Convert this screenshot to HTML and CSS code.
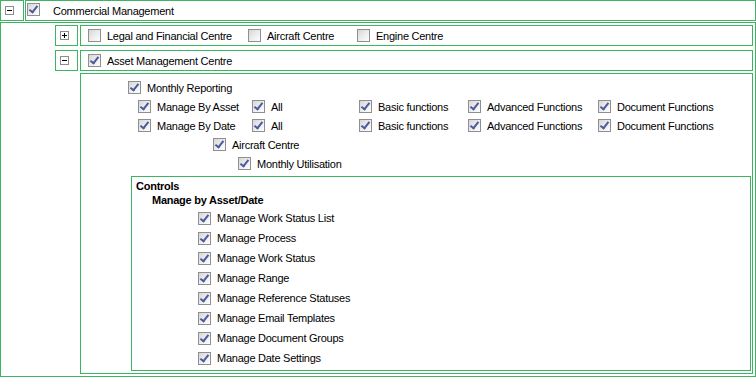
FILE: index.html
```html
<!DOCTYPE html>
<html>
<head>
  <title>Permissions</title>
  <link rel="stylesheet" href="styles.css">
</head>
<body>
  <div class="tree">
    <!-- top level node -->
    <div class="line top">
      <div class="tog"><span class="exp"></span></div>
      <div class="head">
        <span class="cb on"></span><span class="lbl first">Commercial Management</span>
      </div>
    </div>

    <div class="kids">
      <div class="line">
        <div class="tog"><span class="exp plus"></span></div>
        <div class="head">
          <div class="item legal"><span class="cb"></span><span class="lbl">Legal and Financial Centre</span></div>
          <div class="item aircraft"><span class="cb"></span><span class="lbl">Aircraft Centre</span></div>
          <div class="item"><span class="cb"></span><span class="lbl">Engine Centre</span></div>
        </div>
      </div>

      <div class="line">
        <div class="tog"><span class="exp"></span></div>
        <div class="head">
          <div class="item"><span class="cb on"></span><span class="lbl">Asset Management Centre</span></div>
        </div>
      </div>

      <div class="panel">
        <div class="prow lvl1"><span class="cb on"></span><span class="lbl">Monthly Reporting</span></div>

        <div class="pgrid">
          <div class="item"><span class="cb on"></span><span class="lbl">Manage By Asset</span></div>
          <div class="item"><span class="cb on"></span><span class="lbl">All</span></div>
          <div class="item"><span class="cb on"></span><span class="lbl">Basic functions</span></div>
          <div class="item"><span class="cb on"></span><span class="lbl">Advanced Functions</span></div>
          <div class="item"><span class="cb on"></span><span class="lbl">Document Functions</span></div>

          <div class="item"><span class="cb on"></span><span class="lbl">Manage By Date</span></div>
          <div class="item"><span class="cb on"></span><span class="lbl">All</span></div>
          <div class="item"><span class="cb on"></span><span class="lbl">Basic functions</span></div>
          <div class="item"><span class="cb on"></span><span class="lbl">Advanced Functions</span></div>
          <div class="item"><span class="cb on"></span><span class="lbl">Document Functions</span></div>
        </div>

        <div class="prow lvl3"><span class="cb on"></span><span class="lbl">Aircraft Centre</span></div>
        <div class="prow lvl4"><span class="cb on"></span><span class="lbl">Monthly Utilisation</span></div>

        <div class="controls">
          <div class="ctitle">Controls</div>
          <div class="csub">Manage by Asset/Date</div>
          <div class="crow"><span class="cb on"></span><span class="lbl">Manage Work Status List</span></div>
          <div class="crow"><span class="cb on"></span><span class="lbl">Manage Process</span></div>
          <div class="crow"><span class="cb on"></span><span class="lbl">Manage Work Status</span></div>
          <div class="crow"><span class="cb on"></span><span class="lbl">Manage Range</span></div>
          <div class="crow"><span class="cb on"></span><span class="lbl">Manage Reference Statuses</span></div>
          <div class="crow"><span class="cb on"></span><span class="lbl">Manage Email Templates</span></div>
          <div class="crow"><span class="cb on"></span><span class="lbl">Manage Document Groups</span></div>
          <div class="crow"><span class="cb on"></span><span class="lbl">Manage Date Settings</span></div>
        </div>
      </div>
    </div>
  </div>
</body>
</html>
```

FILE: styles.css
```css
html, body {
  margin: 0;
  padding: 0;
  overflow: hidden;
}
body {
  font-family: "Liberation Sans", Arial, sans-serif;
  font-size: 11px;
  letter-spacing: -0.25px;
  color: #000;
  background: #fff;
}
.tree {
  width: 756px;
  height: 377px;
}

/* rows with toggle + header */
.line {
  display: flex;
  gap: 2px;
  height: 21px;
  margin-bottom: 4px;
}
.line.top {
  gap: 1px;
  margin-bottom: 1px;
}
.tog {
  width: 23px;
  box-sizing: border-box;
  border: 1px solid #3cb462;
  display: flex;
  align-items: center;
  padding-left: 4px;
}
.top .tog {
  width: 24px;
}
.head {
  flex: 1;
  box-sizing: border-box;
  border: 1px solid #3cb462;
  display: flex;
  align-items: center;
  padding-left: 7px;
}
.top .head {
  padding-left: 1px;
}
.top .cb {
  margin-bottom: 2px;
}

/* expand / collapse glyph */
.exp {
  width: 9px;
  height: 9px;
  box-sizing: border-box;
  border: 1px solid #8c8c8c;
  background: #fff;
  position: relative;
}
.exp::before {
  content: "";
  position: absolute;
  left: 1px;
  top: 3px;
  width: 5px;
  height: 1px;
  background: #000;
}
.exp.plus::after {
  content: "";
  position: absolute;
  left: 3px;
  top: 1px;
  width: 1px;
  height: 5px;
  background: #000;
}

/* checkbox */
.cb {
  flex: none;
  width: 13px;
  height: 13px;
  box-sizing: border-box;
  border: 1px solid #8f8f8f;
  background: linear-gradient(135deg, #d6d6d6 0%, #eeeeee 55%, #fdfdfd 100%);
  position: relative;
}
.cb.on::after {
  content: "";
  position: absolute;
  left: 3px;
  top: 0px;
  width: 3px;
  height: 7px;
  border: solid #4a5a9e;
  border-width: 0 2px 2px 0;
  transform: rotate(38deg);
}
.lbl {
  margin-left: 6px;
  white-space: nowrap;
}
.lbl.first {
  margin-left: 13px;
}
.item {
  display: flex;
  align-items: center;
}
.item.legal {
  width: 160px;
}
.item.aircraft {
  width: 109px;
}

/* expanded asset panel */
.kids {
  box-sizing: border-box;
  height: 355px;
  border: 1px solid #3cb462;
  padding: 2px 2px 2px 54px;
}
.kids .line + .line {
  margin-bottom: 2px;
}
.panel {
  margin-left: 25px;
  height: 301px;
  box-sizing: border-box;
  border: 1px solid #3cb462;
  padding-top: 4px;
}
.prow {
  display: flex;
  align-items: center;
  height: 19px;
}
.lvl1 { padding-left: 47px; }
.lvl3 { padding-left: 132px; }
.lvl4 { padding-left: 157px; }
.pgrid {
  display: grid;
  grid-template-columns: 114px 107px 109px 130px auto;
  grid-auto-rows: 19px;
  padding-left: 57px;
}

.controls {
  margin: 3px 1px 2px 50px;
  height: 195px;
  box-sizing: border-box;
  border: 1px solid #3cb462;
  padding: 2px 0 2px 4px;
}
.ctitle {
  font-weight: bold;
  line-height: 14px;
}
.csub {
  font-weight: bold;
  line-height: 15px;
  padding-left: 16px;
}
.crow {
  display: flex;
  align-items: center;
  height: 20px;
  padding-left: 62px;
}
```
